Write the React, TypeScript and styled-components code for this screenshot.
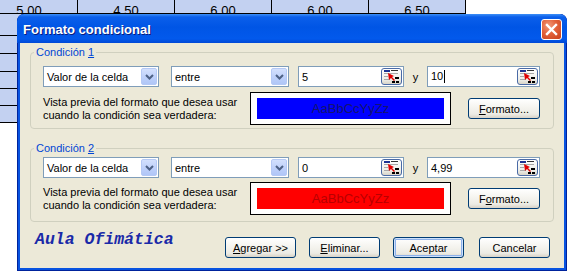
import React from 'react';
import styled, { createGlobalStyle, css } from 'styled-components';

// Page reset and the dialog font
const GlobalStyle = createGlobalStyle`
  html, body {
    margin: 0;
    padding: 0;
    background: #fff;
    overflow: hidden;
  }
  body {
    font-family: "Liberation Sans", Arial, sans-serif;
    font-size: 11px;
    color: #000;
  }
`;

const Screen = styled.div`
  position: relative;
  width: 581px;
  height: 279px;
  overflow: hidden;
  background: #fff;
`;

// Spreadsheet behind the dialog
const Sheet = styled.div`
  display: grid;
  grid-template-columns: repeat(5, 97px);
  grid-template-rows: 14px 22px 18px 18px 17px 17px 17px;
  margin-left: -19px;
  width: max-content;
`;

const Cell = styled.div`
  box-sizing: border-box;
  background: #c3d1f1;
  border-right: 1px solid #000;
  border-bottom: 1px solid #000;
  font: 13px/14px "Liberation Sans", Arial, sans-serif;
  padding-top: 4px;
  text-align: center;
  overflow: hidden;
`;

// Dialog window
const Window = styled.div`
  position: absolute;
  left: 17px;
  top: 14px;
  width: 550px;
  height: 257px;
  box-sizing: border-box;
  display: flex;
  flex-direction: column;
  padding: 0 3px 3px;
  border-radius: 7px 7px 0 0;
  background: #0853e0;
  box-shadow: inset 0 0 0 1px #00239c;
  overflow: hidden;
`;

const TitleBar = styled.div`
  display: flex;
  align-items: center;
  justify-content: space-between;
  height: 29px;
  margin: 0 -3px;
  padding: 1px 5px 0 6px;
  box-sizing: border-box;
  border-radius: 7px 7px 0 0;
  background: linear-gradient(
    to bottom,
    #3d8ff7 0px,
    #0b5fea 3px,
    #0055e5 45%,
    #0259ec 85%,
    #0049d6 100%
  );
`;

const Title = styled.span`
  font: bold 13px "Liberation Sans", Arial, sans-serif;
  color: #fff;
  text-shadow: 1px 1px 0 #0a1c7c;
`;

const CloseButton = styled.div`
  width: 21px;
  height: 21px;
  box-sizing: border-box;
  border: 1px solid #fff;
  border-radius: 3px;
  background: radial-gradient(circle at 35% 30%, #f29a7a 0%, #e2613a 45%, #c8401a 100%);
  display: flex;
  align-items: center;
  justify-content: center;
`;

const Body = styled.div`
  flex: 1;
  display: flex;
  flex-direction: column;
  background: #ece9d8;
  padding: 3px 10px 0;
`;

const Group = styled.fieldset<{ $gap: number; $bottom: number }>`
  margin: ${p => p.$gap}px 0 0;
  padding: 0 12px ${p => p.$bottom}px;
  border: 1px solid #d0d0bf;
  border-radius: 4px;
  min-width: 0;
`;

const Legend = styled.legend`
  margin-left: -9px;
  padding: 0 2px;
  line-height: 13px;
  color: #0046d5;
`;

const Key = styled.span`
  text-decoration: underline;
`;

const FieldRow = styled.div<{ $top: number }>`
  display: flex;
  align-items: center;
  height: 21px;
  margin-top: ${p => p.$top}px;
`;

const Combo = styled.div<{ $width: number; $after: number }>`
  box-sizing: border-box;
  width: ${p => p.$width}px;
  height: 21px;
  margin-right: ${p => p.$after}px;
  display: flex;
  align-items: center;
  justify-content: space-between;
  padding-left: 3px;
  background: #fff;
  border: 1px solid #7f9db9;
`;

const DropButton = styled.div`
  box-sizing: border-box;
  width: 16px;
  height: 17px;
  margin-right: 1px;
  border: 1px solid #b5c9f5;
  border-radius: 2px;
  background: linear-gradient(to bottom, #d3e0fd 0%, #bccffa 60%, #b0c6f7 100%);
  display: flex;
  align-items: center;
  justify-content: center;
`;

const RefBox = styled.div<{ $width: number }>`
  box-sizing: border-box;
  width: ${p => p.$width}px;
  height: 21px;
  display: flex;
  align-items: center;
  justify-content: space-between;
  padding-left: 3px;
  background: #fff;
  border: 1px solid #7f9db9;
`;

const Caret = styled.span`
  display: inline-block;
  width: 1px;
  height: 13px;
  margin-left: 1px;
  vertical-align: middle;
  background: #000;
`;

const RefButton = styled.div`
  box-sizing: border-box;
  width: 21px;
  height: 17px;
  margin-right: 1px;
  border: 1px solid #4a6aa6;
  border-radius: 3px;
  background: linear-gradient(to bottom, #ffffff 0%, #eeeee8 70%, #d8d4c8 100%);
  display: flex;
  align-items: center;
  justify-content: center;
`;

const Connector = styled.span`
  width: 23px;
  text-align: center;
`;

const PreviewRow = styled.div<{ $top: number }>`
  display: flex;
  align-items: center;
  margin-top: ${p => p.$top}px;
`;

const PreviewLabel = styled.div`
  width: 207px;
  line-height: 13px;
`;

const PreviewBox = styled.div`
  box-sizing: border-box;
  width: 201px;
  height: 33px;
  padding: 5px 6px;
  border: 1px solid #000;
  background: #fff;
`;

const Sample = styled.div<{ $bg: string; $fg: string }>`
  height: 21px;
  line-height: 21px;
  text-align: center;
  font-size: 13px;
  background: ${p => p.$bg};
  color: ${p => p.$fg};
`;

const Button = styled.button<{ $primary?: boolean; $after?: number }>`
  box-sizing: border-box;
  width: ${p => (p.$after === undefined ? 72 : 71)}px;
  height: 21px;
  margin-left: ${p => p.$after ?? 0}px;
  padding: 0;
  border: 1px solid #003c74;
  border-radius: 3px;
  background: linear-gradient(to bottom, #ffffff 0%, #f5f4ef 45%, #ecebe4 80%, #d8d2c6 100%);
  font: 11px "Liberation Sans", Arial, sans-serif;
  color: #000;
  ${p =>
    p.$primary &&
    css`
      box-shadow: inset 0 0 0 1px #cde0fb, inset 0 0 0 2px #8eb1ea;
    `}
`;

const FormatButton = styled(Button)`
  margin-left: 17px;
`;

const Footer = styled.div`
  display: flex;
  align-items: flex-start;
  margin: 10px 4px 0 5px;
`;

const Brand = styled.div`
  flex: 1;
  font: italic bold 16.5px/16px "Liberation Mono", "Courier New", monospace;
  color: #1a2aa8;
`;

const FooterButtons = styled.div`
  display: flex;
  margin-top: 5px;
`;

const Chevron = () => (
  <svg width="9" height="6" viewBox="0 0 9 6">
    <path d="M1 1 L4.5 4.5 L8 1" fill="none" stroke="#4d6185" strokeWidth="2" />
  </svg>
);

const RefIcon = () => (
  <svg width="15" height="13" viewBox="0 0 15 13">
    <rect x="0" y="0" width="6" height="2" fill="#1d3393" />
    <rect x="7" y="0" width="7" height="1" fill="#333" />
    <rect x="0" y="3" width="14" height="1" fill="#a8a8a8" />
    <rect x="0" y="6" width="4" height="1" fill="#a8a8a8" />
    <rect x="0" y="9" width="6" height="1" fill="#a8a8a8" />
    <polygon points="4,3 10,6 8,7 11,10 10,11 7,8 5,10" fill="#e00000" />
    <rect x="8" y="11" width="3" height="2" fill="#000" />
    <rect x="12" y="11" width="3" height="2" fill="#000" />
    <rect x="11" y="7" width="4" height="2" fill="#000" />
  </svg>
);

const CloseIcon = () => (
  <svg width="13" height="13" viewBox="0 0 13 13">
    <path d="M2 2 L11 11 M11 2 L2 11" stroke="#fff" strokeWidth="2.4" strokeLinecap="square" />
  </svg>
);

type Condition = {
  index: string;
  from: string;
  to: string;
  caret?: boolean;
  bg: string;
  fg: string;
  formatKey: number;
  // spacing differs a little between the two groups in the original
  gap: number;
  rowTop: number;
  previewTop: number;
  bottom: number;
};

const conditions: Condition[] = [
  {
    index: '1', from: '5', to: '10', caret: true, bg: '#0000ff', fg: '#141470', formatKey: 0,
    gap: 0, rowTop: 7, previewTop: 5, bottom: 3,
  },
  {
    index: '2', from: '0', to: '4,99', bg: '#ff0000', fg: '#b80000', formatKey: 1,
    gap: 13, rowTop: 2, previewTop: 4, bottom: 6,
  },
];

const sheetRows = [
  ['5,00', '4,50', '6,00', '6,00', '6,50'],
  ['', '', '', '', ''],
  ['', '', '', '', ''],
  ['', '', '', '', ''],
  ['', '', '', '', ''],
  ['', '', '', '', ''],
  ['', '', '', '', ''],
];

const FormatLabel = ({ keyAt }: { keyAt: number }) => {
  const word = 'Formato';
  return (
    <>
      {word.slice(0, keyAt)}
      <Key>{word[keyAt]}</Key>
      {word.slice(keyAt + 1)}...
    </>
  );
};

const ConditionGroup = ({ c }: { c: Condition }) => (
  <Group $gap={c.gap} $bottom={c.bottom}>
    <Legend>
      Condición <Key>{c.index}</Key>
    </Legend>
    <FieldRow $top={c.rowTop}>
      <Combo $width={116} $after={12}>
        Valor de la celda
        <DropButton>
          <Chevron />
        </DropButton>
      </Combo>
      <Combo $width={118} $after={9}>
        entre
        <DropButton>
          <Chevron />
        </DropButton>
      </Combo>
      <RefBox $width={106}>
        <span>{c.from}</span>
        <RefButton>
          <RefIcon />
        </RefButton>
      </RefBox>
      <Connector>y</Connector>
      <RefBox $width={113}>
        <span>
          {c.to}
          {c.caret && <Caret />}
        </span>
        <RefButton>
          <RefIcon />
        </RefButton>
      </RefBox>
    </FieldRow>
    <PreviewRow $top={c.previewTop}>
      <PreviewLabel>
        Vista previa del formato que desea usar
        <br />
        cuando la condición sea verdadera:
      </PreviewLabel>
      <PreviewBox>
        <Sample $bg={c.bg} $fg={c.fg}>
          AaBbCcYyZz
        </Sample>
      </PreviewBox>
      <FormatButton>
        <FormatLabel keyAt={c.formatKey} />
      </FormatButton>
    </PreviewRow>
  </Group>
);

export default function App() {
  return (
    <Screen>
      <GlobalStyle />
      <Sheet>
        {sheetRows.map((row, r) =>
          row.map((v, i) => <Cell key={`${r}-${i}`}>{v}</Cell>)
        )}
      </Sheet>
      <Window>
        <TitleBar>
          <Title>Formato condicional</Title>
          <CloseButton>
            <CloseIcon />
          </CloseButton>
        </TitleBar>
        <Body>
          {conditions.map(c => (
            <ConditionGroup key={c.index} c={c} />
          ))}
          <Footer>
            <Brand>Aula Ofimática</Brand>
            <FooterButtons>
              <Button $after={0}>
                <Key>A</Key>gregar &gt;&gt;
              </Button>
              <Button $after={13}>
                <Key>E</Key>liminar...
              </Button>
              <Button $after={13} $primary>
                Aceptar
              </Button>
              <Button $after={15}>Cancelar</Button>
            </FooterButtons>
          </Footer>
        </Body>
      </Window>
    </Screen>
  );
}
